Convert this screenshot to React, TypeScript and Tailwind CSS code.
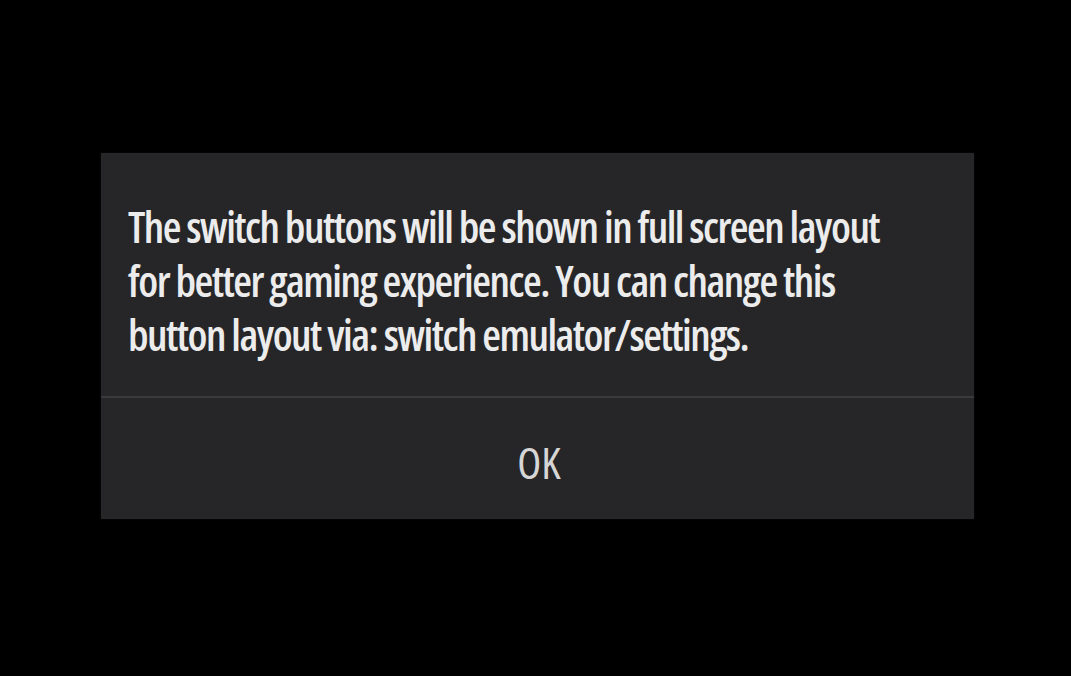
export default function App() {
  return (
    <div className="h-[676px] w-full bg-black pl-[101px] pt-[153px]">
      <div className="flex h-[366px] w-[873px] flex-col bg-[#262628] shadow-[0_0_2px_#111]">
        <div className="h-[243px] pl-[27px] pt-[47px]">
          <p
            className="text-[43px] font-semibold leading-[54px] tracking-[-0.035em] text-[#ececec] [font-stretch:75%]"
            style={{ fontFamily: '"Open Sans", "Noto Sans", sans-serif' }}
          >
            The switch buttons will be shown in full screen layout
            <br />
            for better gaming experience. You can change this
            <br />
            button layout via: switch emulator/settings.
          </p>
        </div>
        <div className="h-[2px] bg-[#3a3a3c]" />
        <button
          className="flex flex-1 items-center justify-center pl-[3px] pt-[6px] text-[44px] leading-none text-[#d6d6d6] [font-stretch:87.5%]"
          style={{ fontFamily: '"Open Sans", "Noto Sans", sans-serif' }}
        >
          OK
        </button>
      </div>
    </div>
  );
}
